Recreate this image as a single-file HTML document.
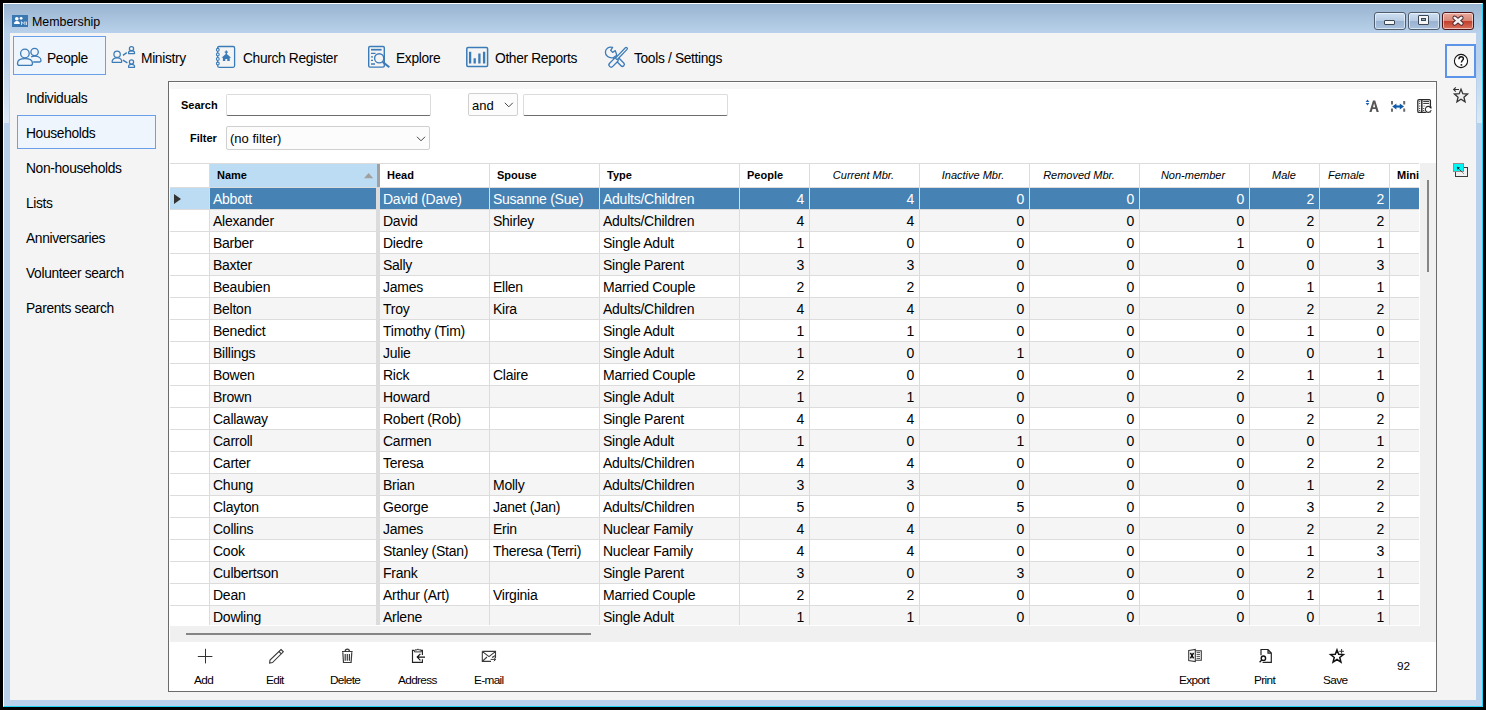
<!DOCTYPE html>
<html><head><meta charset="utf-8">
<style>
*{box-sizing:border-box;margin:0;padding:0}
html,body{width:1486px;height:710px;overflow:hidden;background:#000;font-family:"Liberation Sans",sans-serif;color:#000}
.a{position:absolute}
.t{position:absolute;white-space:pre;font-size:13px;line-height:16px;height:16px}
svg{position:absolute;overflow:visible}
#win{left:3px;top:3px;width:1480px;height:704px;background:#b9d1ea;border-left:1px solid #fff;border-top:1px solid #fff;border-right:1px solid #22d3f5;border-bottom:1px solid #22d3f5}
#tbar{left:4px;top:4px;width:1478px;height:29px;background:linear-gradient(#99b4d1,#b9d1ea)}
#content{left:10px;top:33px;width:1466px;height:667px;background:#f4f4f4}
.wb{top:12px;width:32px;height:18px;border:1px solid #4f5d6f;border-radius:3px;background:linear-gradient(#cfe0f2 0%,#b7cbe3 48%,#98b2d1 50%,#a9c1dd 100%);box-shadow:inset 0 0 0 1px rgba(255,255,255,.55)}
.wb.cl{border-color:#4e1416;background:linear-gradient(#eaa99c 0%,#d98878 48%,#c0402c 52%,#d8725e 100%)}
#people{left:13px;top:36px;width:93px;height:39px;border:1px solid #6a9fe9;background:#eef5fd}
.tb{font-size:13.8px;letter-spacing:-0.35px}
.nav{position:absolute;left:26px;font-size:13.8px;letter-spacing:-0.35px;line-height:16px;white-space:pre}
#hh{left:17px;top:115px;width:139px;height:34px;border:1px solid #6a9fe9;background:#eef5fd}
#panel{left:168px;top:81px;width:1269px;height:611px;border:1px solid #6b6b6b;background:#fff}
#strip{left:170px;top:83px;width:1265px;height:6px;background:#f7f7f7}
.lbl{position:absolute;font-size:11px;font-weight:bold;line-height:14px;white-space:pre}
.inp{position:absolute;background:#fff;border:1px solid #dcdcdc;border-bottom:1px solid #6e6e6e;border-radius:2px}
.dd{position:absolute;background:#fcfcfc;border:1px solid #d0d0d0;border-radius:2px}
#grid{left:170px;top:163px;width:1266px;height:479px;background:#f0f0f0;overflow:hidden}
.hdr{position:absolute;left:0;top:0;width:1249px;height:25px;background:#fff;border-top:1px solid #dcdcdc;border-bottom:1px solid #dcdcdc}
.hc{position:absolute;top:0;height:23px;border-right:1px solid #dcdcdc}
.ht{position:absolute;top:5px;font-size:11px;line-height:13px;white-space:pre}
.ht.b{font-weight:bold}
.ht.i{font-style:italic}
.row{position:absolute;left:0;width:1249px;height:22px;background:#fff}
.row.alt{background:#f5f5f5}
.row .c{position:absolute;top:0;height:22px;border-right:1px solid #dcdcdc;border-bottom:1px solid #dcdcdc;font-size:14px;letter-spacing:-0.25px;line-height:16px;padding:3px 0 0 3px;white-space:pre;overflow:hidden}
.row .c.r{text-align:right;padding:3px 5px 0 0}
.row:before{content:"";position:absolute;left:0;top:0;width:40px;height:22px;border-right:1px solid #dcdcdc;border-bottom:1px solid #dcdcdc;background:#fff;box-sizing:border-box}
.row.sel{background:#4682b4;color:#fff}
.row.sel:before{background:#bcdcf4}
.row .c.nm{border-right:4px solid #dcdcdc}
.row .c.mi{border-right:none}
.tri{position:absolute;left:4px;top:5.5px;width:0;height:0;border-top:5.5px solid transparent;border-bottom:5.5px solid transparent;border-left:7px solid #333;z-index:2}
.bt{position:absolute;font-size:11.8px;line-height:14px;white-space:pre;letter-spacing:-0.65px}
</style></head><body>
<div id="win" class="a"></div>
<div id="tbar" class="a"></div>
<div id="content" class="a"></div>
<div class="a" style="left:1477px;top:58px;width:5px;height:65px;background:linear-gradient(#b9d1ea,#dde8f4)"></div>
<div class="a" style="left:4px;top:58px;width:5px;height:65px;background:linear-gradient(#b9d1ea,#dde8f4)"></div>
<!-- title icon -->
<div class="a" style="left:12px;top:15px;width:16px;height:12px;background:#3a78b4"></div>
<svg style="left:12px;top:15px" width="16" height="12" viewBox="12 15 16 12">
<circle cx="16.8" cy="18.8" r="1.8" fill="#fff"/><circle cx="21.1" cy="18.3" r="1.4" fill="#fff"/>
<path d="M14 24 C14 21.9 15.2 21 16.9 21 C18.6 21 19.9 21.9 19.9 24 Z" fill="#fff"/>
<path d="M21.5 25 V21.6 L23.2 23.6 L24.9 21.6 V25 M26.5 21.6 V25" stroke="#d8e6f4" stroke-width="0.9" fill="none"/>
</svg>
<div class="t" style="left:32px;top:14px;font-size:12.4px;color:#000">Membership</div>
<!-- window buttons -->
<div class="a wb" style="left:1374px"></div>
<div class="a" style="left:1384px;top:20px;width:11px;height:5px;background:#f4f4f4;border:1px solid #3b4654;border-radius:1px"></div>
<div class="a wb" style="left:1408px"></div>
<div class="a" style="left:1418px;top:15px;width:11px;height:10px;background:#f4f4f4;border:1px solid #3b4654;border-radius:1px"></div>
<div class="a" style="left:1421px;top:18px;width:5px;height:3px;background:#8aa6c6;border:1px solid #3b4654"></div>
<div class="a wb cl" style="left:1442px"></div>
<svg style="left:1450px;top:14px" width="16" height="14" viewBox="1450 14 16 14">
<path d="M1454.6 17.8 L1461.4 23.4 M1461.4 17.8 L1454.6 23.4" stroke="#43202a" stroke-width="4.4" stroke-linecap="round"/>
<path d="M1454.6 17.8 L1461.4 23.4 M1461.4 17.8 L1454.6 23.4" stroke="#f2f2f2" stroke-width="2.6" stroke-linecap="round"/>
</svg>
<!-- toolbar -->
<div id="people" class="a"></div>
<svg style="left:16px;top:46px" width="28" height="22" viewBox="16 46 28 22" fill="none" stroke="#3b7bb8" stroke-width="1.3">
<circle cx="34.6" cy="52" r="3.7"/>
<path d="M31.2 56.9 C32.3 56.4 33.4 56.2 34.6 56.2 C38.6 56.2 41 58.2 41 60.6 C41 61.5 40.5 62 39.6 62 L33.2 62"/>
<circle cx="24.9" cy="53.5" r="4.3" fill="#eef5fd"/>
<path d="M19.6 65.3 L30.3 65.3 C31.6 65.3 32.5 64.6 32.5 63.4 C32.5 60.4 29.5 58.6 25 58.6 C20.5 58.6 17.5 60.4 17.5 63.4 C17.5 64.6 18.4 65.3 19.6 65.3 Z" fill="#eef5fd"/>
</svg>
<div class="t tb" style="left:47px;top:51px">People</div>
<svg style="left:109px;top:44px" width="30" height="26" viewBox="109 44 30 26" fill="none" stroke="#3b7bb8" stroke-width="1.25" stroke-linejoin="round">
<circle cx="117.1" cy="54.2" r="3.2"/>
<path d="M112.2 62.3 H121.6 C122.2 59.8 120.5 57.9 117.1 57.9 C113.7 57.9 111.6 59.8 112.2 62.3 Z"/>
<circle cx="131.5" cy="48.7" r="2.1"/>
<path d="M128.6 53.5 V52.4 C128.6 51.4 129.7 50.9 131.5 50.9 C133.3 50.9 134.5 51.4 134.5 52.4 V53.5 Z"/>
<circle cx="131.5" cy="62" r="2.1"/>
<path d="M128.6 67.3 V66.2 C128.6 65.2 129.7 64.3 131.5 64.3 C133.3 64.3 134.5 65.2 134.5 66.2 V67.3 Z"/>
<path d="M122.9 55.3 L126.8 52.7 M122.9 60.1 L127.4 62.8" stroke-width="1.4"/>
</svg>
<div class="t tb" style="left:141px;top:51px">Ministry</div>
<svg style="left:214px;top:44px" width="24" height="26" viewBox="214 44 24 26" fill="none" stroke="#3b7bb8" stroke-width="1.3">
<rect x="217.6" y="46.5" width="17" height="20.8" rx="1.5"/>
<g stroke-width="1.1" fill="#f4f4f4"><circle cx="217.8" cy="49.8" r="1.4"/><circle cx="217.8" cy="54.4" r="1.4"/><circle cx="217.8" cy="58.9" r="1.4"/><circle cx="217.8" cy="63.5" r="1.4"/></g>
<path d="M221.5 57.8 L226.3 53.4 L231.1 57.8 Z M222.9 57 H229.7 V61 H227.3 V58.9 H225.3 V61 H222.9 Z" fill="#3b7bb8" stroke="none"/>
<path d="M226.3 50.4 V54 M224.7 52.1 H227.9" stroke-width="1.3"/>
</svg>
<div class="t tb" style="left:243px;top:51px">Church Register</div>
<svg style="left:366px;top:44px" width="26" height="26" viewBox="366 44 26 26" fill="none" stroke="#3b7bb8" stroke-width="1.4">
<rect x="368.7" y="46.5" width="15.6" height="20.6" rx="1.3"/>
<path d="M371 49.7 H381.6" stroke-width="1.7"/>
<path d="M371 53.3 H375.5 M371 56.8 H373 M371 60.4 H373 M371 64 H375" stroke-width="1.3"/>
<circle cx="379.2" cy="58.3" r="4.6" fill="#f4f4f4"/>
<path d="M382.6 61.9 L389.3 67.3" stroke-width="2"/>
</svg>
<div class="t tb" style="left:396px;top:51px">Explore</div>
<svg style="left:464px;top:45px" width="26" height="24" viewBox="464 45 26 24" fill="none" stroke="#3b7bb8">
<rect x="466.8" y="47.6" width="20.8" height="18.8" rx="1.2" stroke-width="1.5"/>
<path d="M470.1 51.8 V63.6 M474.7 58.2 V63.6 M479.4 53.6 V63.6 M484.1 51.8 V63.6" stroke-width="2.3"/>
</svg>
<div class="t tb" style="left:495px;top:51px">Other Reports</div>
<svg style="left:603px;top:44px" width="27" height="25" viewBox="603 44 27 25" fill="none" stroke-linecap="round">
<line x1="615.2" y1="57.2" x2="622.4" y2="64.4" stroke="#3b7bb8" stroke-width="5.2"/>
<line x1="615.2" y1="57.2" x2="622.4" y2="64.4" stroke="#f4f4f4" stroke-width="2.6"/>
<line x1="615.8" y1="60.2" x2="611.2" y2="64.8" stroke="#3b7bb8" stroke-width="5.8"/>
<line x1="615.8" y1="60.2" x2="611.2" y2="64.8" stroke="#f4f4f4" stroke-width="3.2"/>
<line x1="626.2" y1="48.6" x2="617" y2="58.2" stroke="#3b7bb8" stroke-width="3.6"/>
<line x1="626.2" y1="48.6" x2="617" y2="58.2" stroke="#f4f4f4" stroke-width="1.1"/>
<path d="M612.6 47.4 L610.7 50.3 L612.6 52.4 L615.3 50.6 L616.8 55.2 L613.5 57.6 C608.8 58.6 605.2 55.6 605.4 52 C605.6 48.6 608.8 46.2 612.6 47.4 Z" fill="#f4f4f4" stroke="#3b7bb8" stroke-width="1.3" stroke-linejoin="round"/>
</svg>
<div class="t tb" style="left:634px;top:51px">Tools / Settings</div>
<!-- right side -->
<div class="a" style="left:1445px;top:44px;width:31px;height:34px;border:2px solid #5b94e8"></div>
<svg style="left:1452px;top:52px" width="18" height="18" viewBox="1452 52 18 18">
<circle cx="1461" cy="61" r="6.6" fill="#fff" stroke="#111" stroke-width="1.1"/>
<path d="M1458.9 59.2 C1458.9 57.6 1459.9 56.7 1461.2 56.7 C1462.5 56.7 1463.4 57.6 1463.4 58.7 C1463.4 60.2 1461.4 60.4 1461.4 62.6" fill="none" stroke="#111" stroke-width="1.4"/>
<rect x="1460.6" y="64.1" width="1.6" height="1.6" fill="#111"/>
</svg>
<svg style="left:1450px;top:84px" width="22" height="22" viewBox="1450 84 22 22">
<path d="M1461.00 89.30 L1462.82 93.69 L1467.56 94.07 L1463.95 97.16 L1465.06 101.78 L1461.00 99.30 L1456.94 101.78 L1458.05 97.16 L1454.44 94.07 L1459.18 93.69 Z" fill="#eeeeee" stroke="#333" stroke-width="1.3" stroke-linejoin="miter"/>
<path d="M1459 89.5 H1453.6 M1455.8 87.3 L1453.6 89.5 L1455.8 91.7" fill="none" stroke="#333" stroke-width="1.1"/>
</svg>
<svg style="left:1450px;top:160px" width="22" height="20" viewBox="1450 160 22 20">
<rect x="1455.5" y="167.5" width="12" height="9" fill="#eef0f2" stroke="#3a3a3a" stroke-width="1"/>
<rect x="1453.5" y="163.5" width="10" height="8" fill="#00f5f5" stroke="#9a8a8a" stroke-width="1"/>
<path d="M1463.5 173.5 L1457.3 167.3" stroke="#222" stroke-width="0.9" stroke-dasharray="1.2 0.6"/>
<path d="M1456.8 166.8 L1460 167.6 L1457.6 170 Z" fill="#222"/>
</svg>
<!-- left nav -->
<div id="hh" class="a"></div>
<div class="nav" style="top:91px">Individuals</div>
<div class="nav" style="top:126px">Households</div>
<div class="nav" style="top:161px">Non-households</div>
<div class="nav" style="top:196px">Lists</div>
<div class="nav" style="top:231px">Anniversaries</div>
<div class="nav" style="top:266px">Volunteer search</div>
<div class="nav" style="top:301px">Parents search</div>
<!-- panel -->
<div id="panel" class="a"></div>
<div id="strip" class="a"></div>
<div class="lbl" style="left:181px;top:98px">Search</div>
<div class="inp" style="left:226px;top:94px;width:205px;height:22px"></div>
<div class="dd" style="left:468px;top:93px;width:50px;height:23px"></div>
<div class="t" style="left:472px;top:98px">and</div>
<svg style="left:503px;top:101px" width="11" height="8" viewBox="503 101 11 8"><path d="M504.8 102.8 L508.8 106.8 L512.8 102.8" fill="none" stroke="#444" stroke-width="1"/></svg>
<div class="inp" style="left:523px;top:94px;width:205px;height:22px"></div>
<div class="lbl" style="left:190px;top:131px">Filter</div>
<div class="dd" style="left:226px;top:126px;width:204px;height:24px"></div>
<div class="t" style="left:230px;top:131px">(no filter)</div>
<svg style="left:415px;top:135px" width="11" height="8" viewBox="415 135 11 8"><path d="M417 136.8 L421 140.8 L425 136.8" fill="none" stroke="#444" stroke-width="1"/></svg>
<!-- top right grid tools -->
<svg style="left:1364px;top:97px" width="72" height="18" viewBox="1364 97 72 18">
<path d="M1367.5 99.6 L1369.4 102 H1365.6 Z M1367.5 105.4 L1369.4 103 H1365.6 Z" fill="#1e64b4"/>
<path d="M1369.4 112 L1373 100.4 H1375.2 L1378.8 112 H1376.6 L1375.7 109 H1372.5 L1371.6 112 Z M1373 107.2 H1375.2 L1374.1 103.2 Z" fill="#555" fill-rule="evenodd"/>
<path d="M1392 101 V104.6 M1392 108.4 V111.8 M1404.2 101 V104.6 M1404.2 108.4 V111.8" stroke="#6a6a6a" stroke-width="2"/>
<path d="M1395 106.5 H1401.2" stroke="#0f5aab" stroke-width="2.2"/>
<path d="M1392.2 106.5 L1396.4 103.6 V109.4 Z M1404 106.5 L1399.8 103.6 V109.4 Z" fill="#0f5aab"/>
<rect x="1417.8" y="99.6" width="12.6" height="12.8" rx="1.2" fill="#fff" stroke="#2a2a2a" stroke-width="1.3"/>
<path d="M1421.8 99.8 V112.2" stroke="#2a2a2a" stroke-width="1.5"/>
<path d="M1419.2 101.4 H1420.2 M1419.2 103.4 H1420.2 M1419.2 106.1 H1420.2 M1419.2 108.5 H1420.2 M1419.2 110.5 H1420.2 M1423.2 101.4 H1429 M1423.2 103.4 H1429 M1423.2 108.5 H1424.2 M1423.2 110.5 H1424.2" stroke="#2a2a2a" stroke-width="1"/>
<path d="M1423.2 106 H1425.4" stroke="#999" stroke-width="1"/>
<circle cx="1428.2" cy="109.6" r="3.4" fill="#fff" stroke="none"/>
<path d="M1430.6 107.4 A3 3 0 1 0 1431.2 110.2" fill="none" stroke="#2a2a2a" stroke-width="1.1"/>
<path d="M1429.4 107.3 L1431.6 106.6 L1431.2 108.9 Z" fill="#111"/>
</svg>
<!-- grid -->
<div id="grid" class="a">
<div class="a" style="left:0;top:0;width:1249px;height:462px;overflow:hidden;background:#fff">
<div class="hdr">
 <div class="hc" style="left:0;width:40px;background:#fff"></div>
 <div class="hc" style="left:40px;width:167px;background:#bcdcf4;border-right:none"></div>
 <div class="a" style="left:207px;top:0;width:3px;height:23px;background:#a0a0a0"></div>
 <div class="hc" style="left:210px;width:110px"></div>
 <div class="hc" style="left:320px;width:110px"></div>
 <div class="hc" style="left:430px;width:140px"></div>
 <div class="hc" style="left:570px;width:70px"></div>
 <div class="hc" style="left:640px;width:110px"></div>
 <div class="hc" style="left:750px;width:110px"></div>
 <div class="hc" style="left:860px;width:110px"></div>
 <div class="hc" style="left:970px;width:110px"></div>
 <div class="hc" style="left:1080px;width:70px"></div>
 <div class="hc" style="left:1150px;width:70px"></div>
 <div class="hc" style="left:1220px;width:30px;border-right:none"></div>
 <div class="ht b" style="left:47px">Name</div>
 <svg style="left:194px;top:9px" width="10" height="6" viewBox="0 0 10 6"><path d="M0 5.2 L4.6 0 L9.2 5.2 Z" fill="#a0a0a0"/></svg>
 <div class="ht b" style="left:217px">Head</div>
 <div class="ht b" style="left:327px">Spouse</div>
 <div class="ht b" style="left:437px">Type</div>
 <div class="ht b" style="left:577px">People</div>
 <div class="ht i" style="left:638.5px;width:110px;text-align:center">Current Mbr.</div>
 <div class="ht i" style="left:748px;width:110px;text-align:center">Inactive Mbr.</div>
 <div class="ht i" style="left:854px;width:110px;text-align:center">Removed Mbr.</div>
 <div class="ht i" style="left:968px;width:110px;text-align:center">Non-member</div>
 <div class="ht i" style="left:1079px;width:70px;text-align:center">Male</div>
 <div class="ht i" style="left:1158px">Female</div>
 <div class="ht b" style="left:1227px;width:23px;overflow:hidden">Mini</div>
</div>
<div class="row sel" style="top:25px"><div class="tri"></div><div class="c nm" style="left:40px;width:170px">Abbott</div><div class="c" style="left:210px;width:110px">David (Dave)</div><div class="c" style="left:320px;width:110px">Susanne (Sue)</div><div class="c" style="left:430px;width:140px">Adults/Children</div><div class="c r" style="left:570px;width:70px">4</div><div class="c r" style="left:640px;width:110px">4</div><div class="c r" style="left:750px;width:110px">0</div><div class="c r" style="left:860px;width:110px">0</div><div class="c r" style="left:970px;width:110px">0</div><div class="c r" style="left:1080px;width:70px">2</div><div class="c r" style="left:1150px;width:70px">2</div><div class="c mi" style="left:1220px;width:29px"></div></div>
<div class="row alt" style="top:47px"><div class="c nm" style="left:40px;width:170px">Alexander</div><div class="c" style="left:210px;width:110px">David</div><div class="c" style="left:320px;width:110px">Shirley</div><div class="c" style="left:430px;width:140px">Adults/Children</div><div class="c r" style="left:570px;width:70px">4</div><div class="c r" style="left:640px;width:110px">4</div><div class="c r" style="left:750px;width:110px">0</div><div class="c r" style="left:860px;width:110px">0</div><div class="c r" style="left:970px;width:110px">0</div><div class="c r" style="left:1080px;width:70px">2</div><div class="c r" style="left:1150px;width:70px">2</div><div class="c mi" style="left:1220px;width:29px"></div></div>
<div class="row" style="top:69px"><div class="c nm" style="left:40px;width:170px">Barber</div><div class="c" style="left:210px;width:110px">Diedre</div><div class="c" style="left:320px;width:110px"></div><div class="c" style="left:430px;width:140px">Single Adult</div><div class="c r" style="left:570px;width:70px">1</div><div class="c r" style="left:640px;width:110px">0</div><div class="c r" style="left:750px;width:110px">0</div><div class="c r" style="left:860px;width:110px">0</div><div class="c r" style="left:970px;width:110px">1</div><div class="c r" style="left:1080px;width:70px">0</div><div class="c r" style="left:1150px;width:70px">1</div><div class="c mi" style="left:1220px;width:29px"></div></div>
<div class="row alt" style="top:91px"><div class="c nm" style="left:40px;width:170px">Baxter</div><div class="c" style="left:210px;width:110px">Sally</div><div class="c" style="left:320px;width:110px"></div><div class="c" style="left:430px;width:140px">Single Parent</div><div class="c r" style="left:570px;width:70px">3</div><div class="c r" style="left:640px;width:110px">3</div><div class="c r" style="left:750px;width:110px">0</div><div class="c r" style="left:860px;width:110px">0</div><div class="c r" style="left:970px;width:110px">0</div><div class="c r" style="left:1080px;width:70px">0</div><div class="c r" style="left:1150px;width:70px">3</div><div class="c mi" style="left:1220px;width:29px"></div></div>
<div class="row" style="top:113px"><div class="c nm" style="left:40px;width:170px">Beaubien</div><div class="c" style="left:210px;width:110px">James</div><div class="c" style="left:320px;width:110px">Ellen</div><div class="c" style="left:430px;width:140px">Married Couple</div><div class="c r" style="left:570px;width:70px">2</div><div class="c r" style="left:640px;width:110px">2</div><div class="c r" style="left:750px;width:110px">0</div><div class="c r" style="left:860px;width:110px">0</div><div class="c r" style="left:970px;width:110px">0</div><div class="c r" style="left:1080px;width:70px">1</div><div class="c r" style="left:1150px;width:70px">1</div><div class="c mi" style="left:1220px;width:29px"></div></div>
<div class="row alt" style="top:135px"><div class="c nm" style="left:40px;width:170px">Belton</div><div class="c" style="left:210px;width:110px">Troy</div><div class="c" style="left:320px;width:110px">Kira</div><div class="c" style="left:430px;width:140px">Adults/Children</div><div class="c r" style="left:570px;width:70px">4</div><div class="c r" style="left:640px;width:110px">4</div><div class="c r" style="left:750px;width:110px">0</div><div class="c r" style="left:860px;width:110px">0</div><div class="c r" style="left:970px;width:110px">0</div><div class="c r" style="left:1080px;width:70px">2</div><div class="c r" style="left:1150px;width:70px">2</div><div class="c mi" style="left:1220px;width:29px"></div></div>
<div class="row" style="top:157px"><div class="c nm" style="left:40px;width:170px">Benedict</div><div class="c" style="left:210px;width:110px">Timothy (Tim)</div><div class="c" style="left:320px;width:110px"></div><div class="c" style="left:430px;width:140px">Single Adult</div><div class="c r" style="left:570px;width:70px">1</div><div class="c r" style="left:640px;width:110px">1</div><div class="c r" style="left:750px;width:110px">0</div><div class="c r" style="left:860px;width:110px">0</div><div class="c r" style="left:970px;width:110px">0</div><div class="c r" style="left:1080px;width:70px">1</div><div class="c r" style="left:1150px;width:70px">0</div><div class="c mi" style="left:1220px;width:29px"></div></div>
<div class="row alt" style="top:179px"><div class="c nm" style="left:40px;width:170px">Billings</div><div class="c" style="left:210px;width:110px">Julie</div><div class="c" style="left:320px;width:110px"></div><div class="c" style="left:430px;width:140px">Single Adult</div><div class="c r" style="left:570px;width:70px">1</div><div class="c r" style="left:640px;width:110px">0</div><div class="c r" style="left:750px;width:110px">1</div><div class="c r" style="left:860px;width:110px">0</div><div class="c r" style="left:970px;width:110px">0</div><div class="c r" style="left:1080px;width:70px">0</div><div class="c r" style="left:1150px;width:70px">1</div><div class="c mi" style="left:1220px;width:29px"></div></div>
<div class="row" style="top:201px"><div class="c nm" style="left:40px;width:170px">Bowen</div><div class="c" style="left:210px;width:110px">Rick</div><div class="c" style="left:320px;width:110px">Claire</div><div class="c" style="left:430px;width:140px">Married Couple</div><div class="c r" style="left:570px;width:70px">2</div><div class="c r" style="left:640px;width:110px">0</div><div class="c r" style="left:750px;width:110px">0</div><div class="c r" style="left:860px;width:110px">0</div><div class="c r" style="left:970px;width:110px">2</div><div class="c r" style="left:1080px;width:70px">1</div><div class="c r" style="left:1150px;width:70px">1</div><div class="c mi" style="left:1220px;width:29px"></div></div>
<div class="row alt" style="top:223px"><div class="c nm" style="left:40px;width:170px">Brown</div><div class="c" style="left:210px;width:110px">Howard</div><div class="c" style="left:320px;width:110px"></div><div class="c" style="left:430px;width:140px">Single Adult</div><div class="c r" style="left:570px;width:70px">1</div><div class="c r" style="left:640px;width:110px">1</div><div class="c r" style="left:750px;width:110px">0</div><div class="c r" style="left:860px;width:110px">0</div><div class="c r" style="left:970px;width:110px">0</div><div class="c r" style="left:1080px;width:70px">1</div><div class="c r" style="left:1150px;width:70px">0</div><div class="c mi" style="left:1220px;width:29px"></div></div>
<div class="row" style="top:245px"><div class="c nm" style="left:40px;width:170px">Callaway</div><div class="c" style="left:210px;width:110px">Robert (Rob)</div><div class="c" style="left:320px;width:110px"></div><div class="c" style="left:430px;width:140px">Single Parent</div><div class="c r" style="left:570px;width:70px">4</div><div class="c r" style="left:640px;width:110px">4</div><div class="c r" style="left:750px;width:110px">0</div><div class="c r" style="left:860px;width:110px">0</div><div class="c r" style="left:970px;width:110px">0</div><div class="c r" style="left:1080px;width:70px">2</div><div class="c r" style="left:1150px;width:70px">2</div><div class="c mi" style="left:1220px;width:29px"></div></div>
<div class="row alt" style="top:267px"><div class="c nm" style="left:40px;width:170px">Carroll</div><div class="c" style="left:210px;width:110px">Carmen</div><div class="c" style="left:320px;width:110px"></div><div class="c" style="left:430px;width:140px">Single Adult</div><div class="c r" style="left:570px;width:70px">1</div><div class="c r" style="left:640px;width:110px">0</div><div class="c r" style="left:750px;width:110px">1</div><div class="c r" style="left:860px;width:110px">0</div><div class="c r" style="left:970px;width:110px">0</div><div class="c r" style="left:1080px;width:70px">0</div><div class="c r" style="left:1150px;width:70px">1</div><div class="c mi" style="left:1220px;width:29px"></div></div>
<div class="row" style="top:289px"><div class="c nm" style="left:40px;width:170px">Carter</div><div class="c" style="left:210px;width:110px">Teresa</div><div class="c" style="left:320px;width:110px"></div><div class="c" style="left:430px;width:140px">Adults/Children</div><div class="c r" style="left:570px;width:70px">4</div><div class="c r" style="left:640px;width:110px">4</div><div class="c r" style="left:750px;width:110px">0</div><div class="c r" style="left:860px;width:110px">0</div><div class="c r" style="left:970px;width:110px">0</div><div class="c r" style="left:1080px;width:70px">2</div><div class="c r" style="left:1150px;width:70px">2</div><div class="c mi" style="left:1220px;width:29px"></div></div>
<div class="row alt" style="top:311px"><div class="c nm" style="left:40px;width:170px">Chung</div><div class="c" style="left:210px;width:110px">Brian</div><div class="c" style="left:320px;width:110px">Molly</div><div class="c" style="left:430px;width:140px">Adults/Children</div><div class="c r" style="left:570px;width:70px">3</div><div class="c r" style="left:640px;width:110px">3</div><div class="c r" style="left:750px;width:110px">0</div><div class="c r" style="left:860px;width:110px">0</div><div class="c r" style="left:970px;width:110px">0</div><div class="c r" style="left:1080px;width:70px">1</div><div class="c r" style="left:1150px;width:70px">2</div><div class="c mi" style="left:1220px;width:29px"></div></div>
<div class="row" style="top:333px"><div class="c nm" style="left:40px;width:170px">Clayton</div><div class="c" style="left:210px;width:110px">George</div><div class="c" style="left:320px;width:110px">Janet (Jan)</div><div class="c" style="left:430px;width:140px">Adults/Children</div><div class="c r" style="left:570px;width:70px">5</div><div class="c r" style="left:640px;width:110px">0</div><div class="c r" style="left:750px;width:110px">5</div><div class="c r" style="left:860px;width:110px">0</div><div class="c r" style="left:970px;width:110px">0</div><div class="c r" style="left:1080px;width:70px">3</div><div class="c r" style="left:1150px;width:70px">2</div><div class="c mi" style="left:1220px;width:29px"></div></div>
<div class="row alt" style="top:355px"><div class="c nm" style="left:40px;width:170px">Collins</div><div class="c" style="left:210px;width:110px">James</div><div class="c" style="left:320px;width:110px">Erin</div><div class="c" style="left:430px;width:140px">Nuclear Family</div><div class="c r" style="left:570px;width:70px">4</div><div class="c r" style="left:640px;width:110px">4</div><div class="c r" style="left:750px;width:110px">0</div><div class="c r" style="left:860px;width:110px">0</div><div class="c r" style="left:970px;width:110px">0</div><div class="c r" style="left:1080px;width:70px">2</div><div class="c r" style="left:1150px;width:70px">2</div><div class="c mi" style="left:1220px;width:29px"></div></div>
<div class="row" style="top:377px"><div class="c nm" style="left:40px;width:170px">Cook</div><div class="c" style="left:210px;width:110px">Stanley (Stan)</div><div class="c" style="left:320px;width:110px">Theresa (Terri)</div><div class="c" style="left:430px;width:140px">Nuclear Family</div><div class="c r" style="left:570px;width:70px">4</div><div class="c r" style="left:640px;width:110px">4</div><div class="c r" style="left:750px;width:110px">0</div><div class="c r" style="left:860px;width:110px">0</div><div class="c r" style="left:970px;width:110px">0</div><div class="c r" style="left:1080px;width:70px">1</div><div class="c r" style="left:1150px;width:70px">3</div><div class="c mi" style="left:1220px;width:29px"></div></div>
<div class="row alt" style="top:399px"><div class="c nm" style="left:40px;width:170px">Culbertson</div><div class="c" style="left:210px;width:110px">Frank</div><div class="c" style="left:320px;width:110px"></div><div class="c" style="left:430px;width:140px">Single Parent</div><div class="c r" style="left:570px;width:70px">3</div><div class="c r" style="left:640px;width:110px">0</div><div class="c r" style="left:750px;width:110px">3</div><div class="c r" style="left:860px;width:110px">0</div><div class="c r" style="left:970px;width:110px">0</div><div class="c r" style="left:1080px;width:70px">2</div><div class="c r" style="left:1150px;width:70px">1</div><div class="c mi" style="left:1220px;width:29px"></div></div>
<div class="row" style="top:421px"><div class="c nm" style="left:40px;width:170px">Dean</div><div class="c" style="left:210px;width:110px">Arthur (Art)</div><div class="c" style="left:320px;width:110px">Virginia</div><div class="c" style="left:430px;width:140px">Married Couple</div><div class="c r" style="left:570px;width:70px">2</div><div class="c r" style="left:640px;width:110px">2</div><div class="c r" style="left:750px;width:110px">0</div><div class="c r" style="left:860px;width:110px">0</div><div class="c r" style="left:970px;width:110px">0</div><div class="c r" style="left:1080px;width:70px">1</div><div class="c r" style="left:1150px;width:70px">1</div><div class="c mi" style="left:1220px;width:29px"></div></div>
<div class="row alt" style="top:443px"><div class="c nm" style="left:40px;width:170px">Dowling</div><div class="c" style="left:210px;width:110px">Arlene</div><div class="c" style="left:320px;width:110px"></div><div class="c" style="left:430px;width:140px">Single Adult</div><div class="c r" style="left:570px;width:70px">1</div><div class="c r" style="left:640px;width:110px">1</div><div class="c r" style="left:750px;width:110px">0</div><div class="c r" style="left:860px;width:110px">0</div><div class="c r" style="left:970px;width:110px">0</div><div class="c r" style="left:1080px;width:70px">0</div><div class="c r" style="left:1150px;width:70px">1</div><div class="c mi" style="left:1220px;width:29px"></div></div></div>
<!-- v scrollbar -->
<div class="a" style="left:1249px;top:0;width:1px;height:462px;background:#fff"></div>
<div class="a" style="left:0;top:462px;width:1250px;height:1px;background:#fff"></div>
<div class="a" style="left:1257px;top:17px;width:2px;height:92px;background:#858585"></div>
<!-- h scrollbar -->
<div class="a" style="left:16px;top:470px;width:405px;height:2px;background:#858585"></div>
</div>
<!-- bottom toolbar -->
<svg style="left:190px;top:645px" width="320" height="22" viewBox="190 645 320 22" fill="none" stroke="#3a3a3a" stroke-width="1.1">
<path d="M205.5 648.8 V663.4 M197.8 656.5 H212.4" stroke-width="1" stroke="#333"/>
<path d="M281 649.5 L283.3 651.8 L272.5 662.6 L269.6 663 L270 660.1 Z M279 651.5 L281.3 653.8" stroke-width="1.1"/>
<path d="M342 651.5 H352.6 M345.2 651.3 C345.2 649.8 345.8 649.2 347.3 649.2 C348.8 649.2 349.4 649.8 349.4 651.3 M342.8 652.2 L343.5 662.5 H351.1 L351.8 652.2 M345.2 654 V660.8 M347.3 654 V660.8 M349.4 654 V660.8" stroke-width="1.2"/>
<path d="M414.2 650.4 H412.5 V662.4 H422.4 V659.2 M422.4 655 V650.4 H420.8" stroke-width="1.15" stroke="#222"/>
<path d="M414.3 651.9 L415 649.9 H417.2 L417.9 648.9 L418.6 649.9 H420.9 L421.4 651.9 Z" stroke-width="1" stroke="#333"/>
<path d="M425 657.1 H417.2 M420.4 653.9 L417.2 657.1 L420.4 660.3" stroke-width="1.15" stroke="#111"/>
<path d="M482.3 651.4 H495.5 V658 M482.3 651.4 V661.4 H491 M482.5 651.6 L489 656.6 L495.3 651.6 M482.5 661.2 L487 657 M495.4 655.5 L492 657.4" stroke-width="1.1"/>
<path d="M490.6 659.4 H495.6 M493.8 657.6 L495.8 659.4 L493.8 661.2" stroke-width="1"/>
</svg>
<div class="bt" style="left:194px;top:673px">Add</div>
<div class="bt" style="left:266px;top:673px">Edit</div>
<div class="bt" style="left:330px;top:673px">Delete</div>
<div class="bt" style="left:398px;top:673px">Address</div>
<div class="bt" style="left:474px;top:673px">E-mail</div>
<svg style="left:1185px;top:645px" width="165" height="22" viewBox="1185 645 165 22" fill="none" stroke="#3a3a3a" stroke-width="1.1">
<path d="M1188.7 650.5 L1195.3 649.4 V661.6 L1188.7 660.6 Z" />
<path d="M1195.3 650.8 H1201.3 V660.2 H1195.3" />
<path d="M1190.4 652.8 L1193.6 658.4 M1193.6 652.8 L1190.4 658.4" stroke-width="1.5" stroke="#111"/>
<path d="M1196.6 652.4 H1200 M1196.6 654.4 H1200 M1196.6 656.4 H1200 M1196.6 658.4 H1200" stroke-width="0.9"/>
<path d="M1261 655.2 V649.5 H1268 L1271.3 653 V662.4 H1262.6 M1268 649.8 V653.2 H1271" stroke="#222" stroke-width="1.2"/>
<circle cx="1263.4" cy="658.2" r="2.2" stroke="#111" stroke-width="1.4"/>
<path d="M1261.8 659.9 L1259.6 662.2" stroke="#111" stroke-width="1.3"/>
<path d="M1337.00 649.90 L1338.70 654.25 L1343.37 654.53 L1339.76 657.50 L1340.94 662.02 L1337.00 659.50 L1333.06 662.02 L1334.24 657.50 L1330.63 654.53 L1335.30 654.25 Z" stroke-width="1.5" stroke="#111" stroke-linejoin="miter"/>
<path d="M1341.6 649 V653.6 M1339.3 651.3 H1343.9" stroke-width="1" stroke="#333"/>
</svg>
<div class="bt" style="left:1179px;top:673px">Export</div>
<div class="bt" style="left:1254px;top:673px">Print</div>
<div class="bt" style="left:1323px;top:673px">Save</div>
<div class="bt" style="left:1397px;top:659px;letter-spacing:0">92</div>
</body></html>
